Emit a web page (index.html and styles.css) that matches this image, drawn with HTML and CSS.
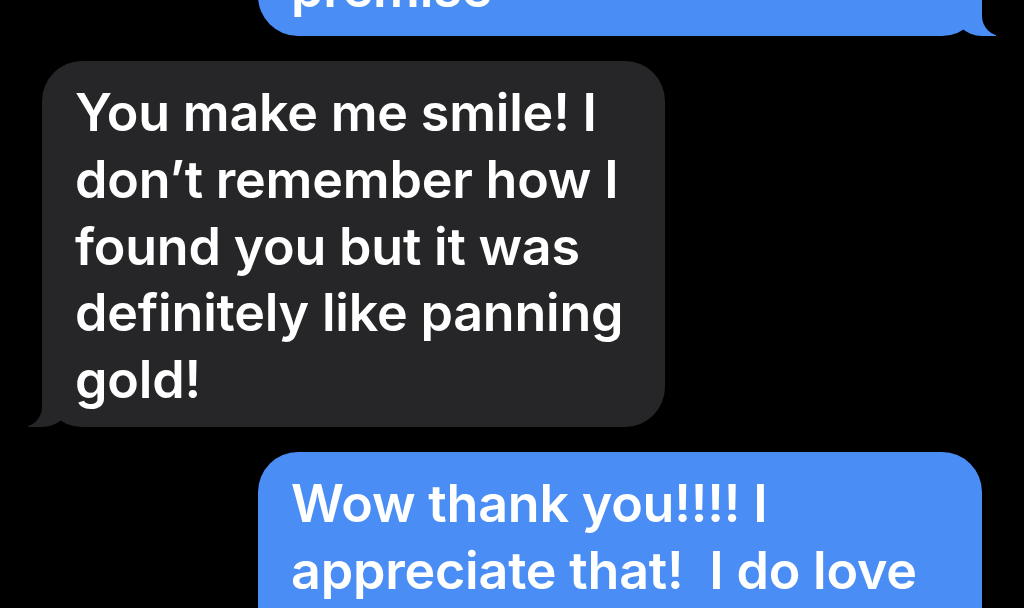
FILE: index.html
```html
<!DOCTYPE html>
<html lang="en">
<head>
<meta charset="utf-8">
<title>Messages</title>
<link rel="stylesheet" href="styles.css">
</head>
<body>
<main class="thread">
  <div class="bubble me tail">premise</div>
  <div class="bubble them tail">You make me smile! I<br>don’t remember how I<br>found you but it was<br>definitely like panning<br>gold!</div>
  <div class="bubble me">Wow thank you!!!! I<br>appreciate that!&nbsp; I do love<br>what I do and it makes</div>
</main>
</body>
</html>
```
FILE: styles.css
```css
html, body {
  margin: 0;
  padding: 0;
  height: 100%;
  overflow: hidden;
  background: #000;
}

.thread {
  display: flex;
  flex-direction: column;
  gap: 25.5px;
  padding: 0 42px;
  margin-top: -63px;
  font-family: Inter, "Noto Sans", sans-serif;
  font-weight: 560;
  font-size: 52px;
  line-height: 66.7px;
  letter-spacing: -0.2px;
  color: #fff;
}

.bubble {
  position: relative;
  box-sizing: border-box;
  padding: 19px 30px 13px 33px;
  border-radius: 40px;
  white-space: nowrap;
}

.me {
  align-self: flex-end;
  width: 724px;
  background: #4a8ef5;
}

.them {
  align-self: flex-start;
  width: 623px;
  background: #262628;
}

.tail::before,
.tail::after {
  content: "";
  position: absolute;
  bottom: 0;
  height: 40px;
}

.them.tail::before {
  left: -14px;
  width: 44px;
  background: #262628;
  border-bottom-right-radius: 30px;
}

.them.tail::after {
  left: -20px;
  width: 20px;
  background: #000;
  border-bottom-right-radius: 20px;
}

.me.tail::before {
  right: -14px;
  width: 44px;
  background: #4a8ef5;
  border-bottom-left-radius: 30px;
}

.me.tail::after {
  right: -20px;
  width: 20px;
  background: #000;
  border-bottom-left-radius: 20px;
}
```
